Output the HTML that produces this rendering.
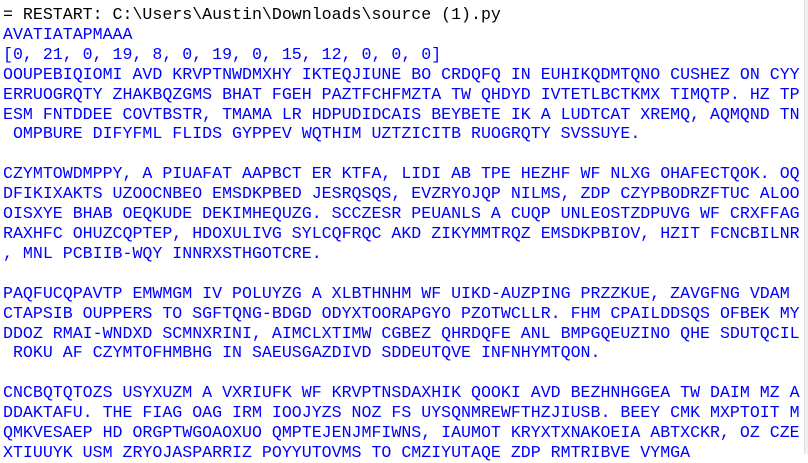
<!DOCTYPE html>
<html><head><meta charset="utf-8"><style>
html,body{margin:0;padding:0;background:#fff;width:808px;height:454px;overflow:hidden}
pre{position:absolute;left:3px;top:5px;margin:0;font-family:"Liberation Mono","Courier New",monospace;font-size:16.6px;line-height:19.9px;color:#0000ff;white-space:pre}
.k{color:#000}
.sb{position:absolute;left:804px;top:0;width:4px;height:454px;background:#f0f0f0;border-left:1px solid #e0e0e0}
</style></head><body>
<pre><span class="k">= RESTART: C:\Users\Austin\Downloads\source (1).py</span>
AVATIATAPMAAA
[0, 21, 0, 19, 8, 0, 19, 0, 15, 12, 0, 0, 0]
OOUPEBIQIOMI AVD KRVPTNWDMXHY IKTEQJIUNE BO CRDQFQ IN EUHIKQDMTQNO CUSHEZ ON CYY
ERRUOGRQTY ZHAKBQZGMS BHAT FGEH PAZTFCHFMZTA TW QHDYD IVTETLBCTKMX TIMQTP. HZ TP
ESM FNTDDEE COVTBSTR, TMAMA LR HDPUDIDCAIS BEYBETE IK A LUDTCAT XREMQ, AQMQND TN
 OMPBURE DIFYFML FLIDS GYPPEV WQTHIM UZTZICITB RUOGRQTY SVSSUYE.

CZYMTOWDMPPY, A PIUAFAT AAPBCT ER KTFA, LIDI AB TPE HEZHF WF NLXG OHAFECTQOK. OQ
DFIKIXAKTS UZOOCNBEO EMSDKPBED JESRQSQS, EVZRYOJQP NILMS, ZDP CZYPBODRZFTUC ALOO
OISXYE BHAB OEQKUDE DEKIMHEQUZG. SCCZESR PEUANLS A CUQP UNLEOSTZDPUVG WF CRXFFAG
RAXHFC OHUZCQPTEP, HDOXULIVG SYLCQFRQC AKD ZIKYMMTRQZ EMSDKPBIOV, HZIT FCNCBILNR
, MNL PCBIIB-WQY INNRXSTHGOTCRE.

PAQFUCQPAVTP EMWMGM IV POLUYZG A XLBTHNHM WF UIKD-AUZPING PRZZKUE, ZAVGFNG VDAM
CTAPSIB OUPPERS TO SGFTQNG-BDGD ODYXTOORAPGYO PZOTWCLLR. FHM CPAILDDSQS OFBEK MY
DDOZ RMAI-WNDXD SCMNXRINI, AIMCLXTIMW CGBEZ QHRDQFE ANL BMPGQEUZINO QHE SDUTQCIL
 ROKU AF CZYMTOFHMBHG IN SAEUSGAZDIVD SDDEUTQVE INFNHYMTQON.

CNCBQTQTOZS USYXUZM A VXRIUFK WF KRVPTNSDAXHIK QOOKI AVD BEZHNHGGEA TW DAIM MZ A
DDAKTAFU. THE FIAG OAG IRM IOOJYZS NOZ FS UYSQNMREWFTHZJIUSB. BEEY CMK MXPTOIT M
QMKVESAEP HD ORGPTWGOAOXUO QMPTEJENJMFIWNS, IAUMOT KRYXTXNAKOEIA ABTXCKR, OZ CZE
XTIUUYK USM ZRYOJASPARRIZ POYYUTOVMS TO CMZIYUTAQE ZDP RMTRIBVE VYMGA</pre>
<div class="sb"></div>
</body></html>
